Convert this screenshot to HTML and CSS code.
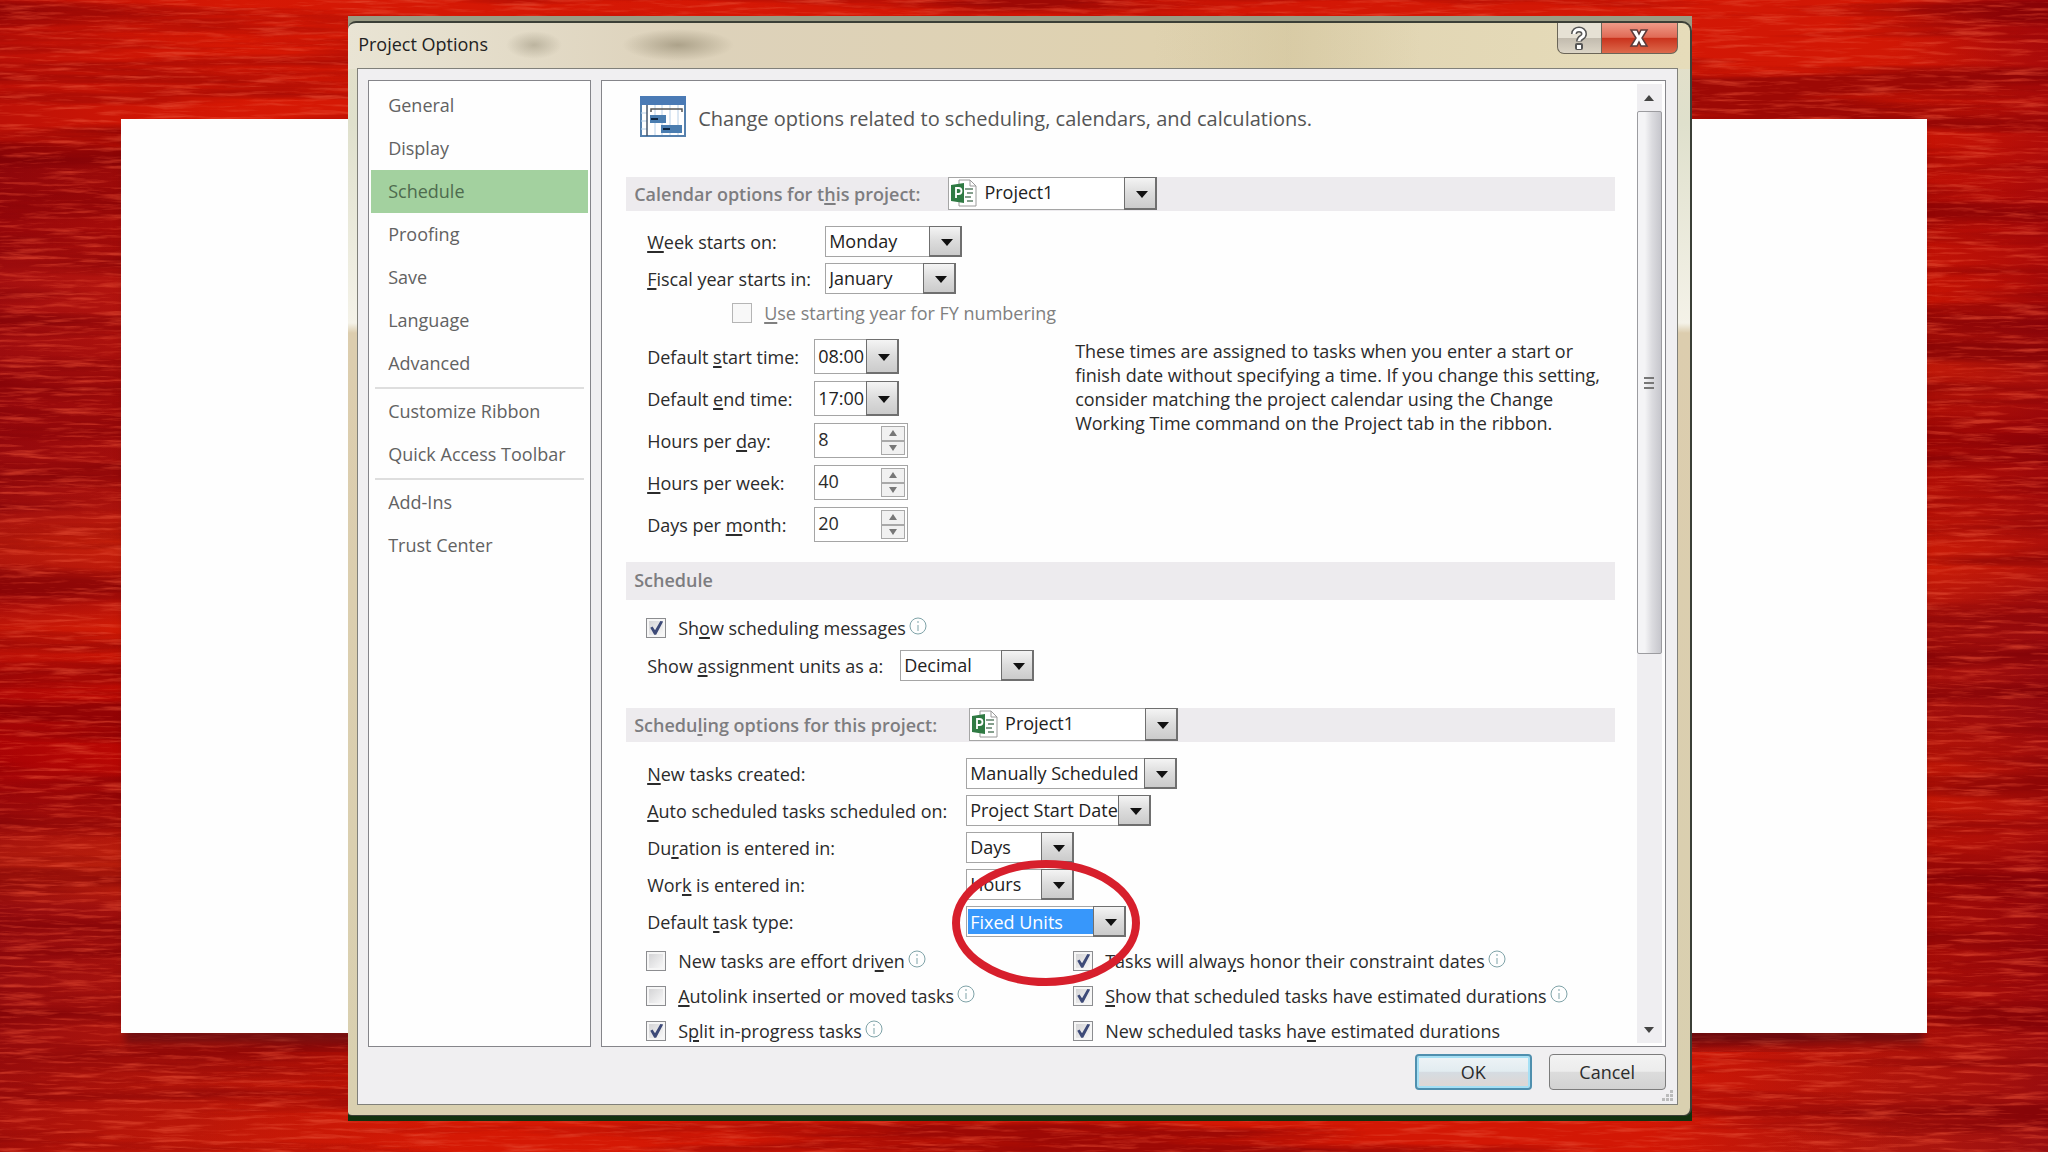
FILE: index.html
```html
<!DOCTYPE html>
<html lang="en">
<head>
<meta charset="utf-8">
<title>Project Options</title>
<link rel="stylesheet" href="styles.css">
</head>
<body>
<svg class="paint" aria-hidden="true" preserveAspectRatio="none" viewBox="0 0 2048 1152">
  <defs>
    <linearGradient id="left" x1="0" y1="0" x2="0" y2="1">
      <stop offset="0" stop-color="#c81406"/><stop offset=".1" stop-color="#d81c07"/>
      <stop offset=".125" stop-color="#c81205"/><stop offset=".14" stop-color="#930709"/>
      <stop offset=".2" stop-color="#a30a0a"/><stop offset=".24" stop-color="#b31410"/>
      <stop offset=".38" stop-color="#9c0a0c"/><stop offset=".44" stop-color="#a8120e"/>
      <stop offset=".47" stop-color="#cc230c"/><stop offset=".52" stop-color="#b0100a"/>
      <stop offset=".545" stop-color="#d61c06"/><stop offset=".6" stop-color="#bf0a04"/>
      <stop offset=".66" stop-color="#b80403"/><stop offset=".7" stop-color="#a50c0a"/>
      <stop offset=".76" stop-color="#c2260f"/><stop offset=".79" stop-color="#9a0d0e"/>
      <stop offset=".88" stop-color="#a5120f"/><stop offset=".93" stop-color="#a8120c"/>
      <stop offset="1" stop-color="#bb1609"/>
    </linearGradient>
    <linearGradient id="right" x1="0" y1="0" x2="0" y2="1">
      <stop offset="0" stop-color="#b00a07"/><stop offset=".06" stop-color="#c21106"/>
      <stop offset=".12" stop-color="#c91305"/><stop offset=".18" stop-color="#b80d06"/>
      <stop offset=".26" stop-color="#c81304"/><stop offset=".28" stop-color="#8d0607"/>
      <stop offset=".32" stop-color="#c01a0a"/><stop offset=".38" stop-color="#9d0505"/>
      <stop offset=".44" stop-color="#b81208"/><stop offset=".49" stop-color="#cf1d07"/>
      <stop offset=".54" stop-color="#a5110e"/><stop offset=".62" stop-color="#990c0c"/>
      <stop offset=".68" stop-color="#c81a06"/><stop offset=".73" stop-color="#b51107"/>
      <stop offset=".76" stop-color="#960707"/><stop offset=".86" stop-color="#a40c09"/>
      <stop offset=".92" stop-color="#a8120c"/><stop offset="1" stop-color="#a51510"/>
    </linearGradient>
    <linearGradient id="edge" x1="0" y1="0" x2="1" y2="0">
      <stop offset="0" stop-color="#700010" stop-opacity=".2"/><stop offset=".12" stop-color="#ff3000" stop-opacity=".12"/>
      <stop offset=".88" stop-color="#ff3000" stop-opacity=".05"/><stop offset="1" stop-color="#800010" stop-opacity=".35"/>
    </linearGradient>
    <linearGradient id="stroke" x1="0" y1="0" x2="1" y2="0">
      <stop offset="0" stop-color="#d01605" stop-opacity="0"/><stop offset=".15" stop-color="#d01605"/>
      <stop offset=".85" stop-color="#d01605"/><stop offset="1" stop-color="#d01605" stop-opacity="0"/>
    </linearGradient>
    <filter id="fine" x="0" y="0" width="100%" height="100%" color-interpolation-filters="sRGB">
      <feTurbulence type="fractalNoise" baseFrequency=".02 .25" numOctaves="4" seed="7"/>
      <feColorMatrix values="0 0 0 0 .9  0 0 0 0 .3  0 0 0 0 .2  3 0 0 0 -1.45"/>
    </filter>
    <filter id="broad" x="0" y="0" width="100%" height="100%" color-interpolation-filters="sRGB">
      <feTurbulence type="fractalNoise" baseFrequency=".0015 .03" numOctaves="6" seed="21"/>
      <feColorMatrix values="0 0 0 0 .48  0 0 0 0 0  0 0 0 0 .02  4 0 0 0 -1.75"/>
    </filter>
  </defs>
  <rect width="1024" height="1152" fill="url(#left)"/>
  <rect x="1024" width="1024" height="1152" fill="url(#right)"/>
  <path d="M0 0H1500V119H700L270 172L0 128Z" fill="#d01505"/>
  <rect x="1300" width="700" height="119" fill="url(#stroke)"/>
  <rect x="200" y="1052" width="1700" height="100" fill="url(#stroke)"/>
  <rect width="2048" height="1152" fill="url(#edge)"/>
  <rect width="2048" height="1152" filter="url(#broad)" opacity=".6"/>
  <rect width="2048" height="1152" filter="url(#fine)" opacity=".6"/>
</svg>

<main class="stage">
  <div class="card"></div>
  <div class="shell">
    <section class="window" aria-labelledby="dlg-title">
      <header class="titlebar">
        <h1 id="dlg-title">Project Options</h1>
        <div class="caption">
          <button type="button" class="cap help" aria-label="Help">
            <svg width="18" height="24" viewBox="0 0 18 24"><path d="M4 8C4 2 14 2 14 8C14 12 9 11 9 15.500" fill="none" stroke="#555" stroke-width="6"/><rect x="5" y="17" width="8" height="7" rx="2" fill="#555"/><path d="M4 8C4 2 14 2 14 8C14 12 9 11 9 15" fill="none" stroke="#fff" stroke-width="3"/><rect x="7" y="19" width="4" height="4" fill="#fff"/></svg>
          </button>
          <button type="button" class="cap close" aria-label="Close">
            <svg width="20" height="18" viewBox="0 0 20 18"><path d="M2 1H8L10 5L12 1H18L13 9L18 17H12L10 13L8 17H2L7 9Z" fill="#fff" stroke="#5b3a3a" stroke-width="1.500"/></svg>
          </button>
        </div>
      </header>

      <form class="client" onsubmit="return false">
        <div class="columns">
          <nav class="nav">
            <a href="#general">General</a>
            <a href="#display">Display</a>
            <a href="#schedule" class="current" aria-current="page">Schedule</a>
            <a href="#proofing">Proofing</a>
            <a href="#save">Save</a>
            <a href="#language">Language</a>
            <a href="#advanced">Advanced</a>
            <hr>
            <a href="#ribbon">Customize Ribbon</a>
            <a href="#toolbar">Quick Access Toolbar</a>
            <hr>
            <a href="#addins">Add-Ins</a>
            <a href="#trust">Trust Center</a>
          </nav>

          <div class="panel">
            <div class="content">
              <div class="intro">
                <svg width="46" height="41" viewBox="0 0 46 41"><rect x="1" y="1" width="44" height="39" fill="#fff" stroke="#5580ad" stroke-width="2"/><rect width="46" height="9" fill="#4a7ab5"/><path d="M15 9V39M22 9V39M30 9V39M38 9V39M1 17H7M1 25H7M1 33H7" stroke="#b8d0e8" stroke-width="1"/><path d="M7 9V40" stroke="#44546a" stroke-width="1.500"/><path d="M11 16V13H42V16" fill="none" stroke="#555" stroke-width="1.500"/><rect x="10" y="19" width="16" height="8" fill="#4a7db0"/><rect x="21" y="29" width="21" height="8" fill="#4a7db0"/><path d="M11 23H18M23 33H30" stroke="#0b2440" stroke-width="2"/></svg>
                <p>Change options related to scheduling, calendars, and calculations.</p>
              </div>

              <div class="bar">
                <label for="cal">Calendar options for t<u>h</u>is project:</label>
                <span class="combo project"><svg class="doc" width="26" height="28" viewBox="0 0 26 28"><path d="M8 1H19L25 7V27H8Z" fill="#fff" stroke="#9a9a9a"/><path d="M19 1V7H25" fill="none" stroke="#9a9a9a"/><path d="M14 10H22M16 14H22M14 18H20M16 22H22" stroke="#5e8068" stroke-width="1.500"/><path d="M0 6L13 4V24L0 22Z" fill="#2f7a43"/><path d="M5 19V9H7.500A3 3 0 0 1 7.500 15H5" fill="none" stroke="#fff" stroke-width="1.800"/></svg><select id="cal"><option>Project1</option></select></span>
              </div>

              <div class="fields near">
                <label for="week"><u>W</u>eek starts on:</label>
                <span class="combo w-137"><select id="week"><option>Monday</option></select></span>
                <label for="fiscal"><u>F</u>iscal year starts in:</label>
                <span class="combo w-131"><select id="fiscal"><option>January</option></select></span>
              </div>
              <div class="check inset">
                <input type="checkbox" id="fy" disabled><label for="fy"><u>U</u>se starting year for FY numbering</label>
              </div>

              <div class="times">
                <div class="fields tall">
                  <label for="start">Default <u>s</u>tart time:</label>
                  <span class="combo w-85"><select id="start"><option>08:00</option></select></span>
                  <label for="end">Default <u>e</u>nd time:</label>
                  <span class="combo w-85"><select id="end"><option>17:00</option></select></span>
                  <label for="hday">Hours per <u>d</u>ay:</label>
                  <span class="spin"><input id="hday" type="text" inputmode="numeric" value="8"><span class="steps"><button type="button" aria-label="More hours per day"></button><button type="button" aria-label="Fewer hours per day"></button></span></span>
                  <label for="hweek"><u>H</u>ours per week:</label>
                  <span class="spin"><input id="hweek" type="text" inputmode="numeric" value="40"><span class="steps"><button type="button" aria-label="More hours per week"></button><button type="button" aria-label="Fewer hours per week"></button></span></span>
                  <label for="dmonth">Days per <u>m</u>onth:</label>
                  <span class="spin"><input id="dmonth" type="text" inputmode="numeric" value="20"><span class="steps"><button type="button" aria-label="More days per month"></button><button type="button" aria-label="Fewer days per month"></button></span></span>
                </div>
                <p class="note">These times are assigned to tasks when you enter a start or<br>finish date without specifying a time. If you change this setting,<br>consider matching the project calendar using the Change<br>Working Time command on the Project tab in the ribbon.</p>
              </div>

              <div class="bar plain"><h2>Schedule</h2></div>
              <div class="check">
                <input type="checkbox" id="msgs" checked><label for="msgs">Sh<u>o</u>w scheduling messages</label><svg class="info" viewBox="0 0 18 18"><circle cx="9" cy="9" r="8"/><path d="M9 4V6M9 8V14"/></svg>
              </div>
              <div class="fields units">
                <label for="units">Show <u>a</u>ssignment units as a:</label>
                <span class="combo w-134"><select id="units"><option>Decimal</option></select></span>
              </div>

              <div class="bar last">
                <label for="sched">Schedu<u>l</u>ing options for this project:</label>
                <span class="combo project"><svg class="doc" width="26" height="28" viewBox="0 0 26 28"><path d="M8 1H19L25 7V27H8Z" fill="#fff" stroke="#9a9a9a"/><path d="M19 1V7H25" fill="none" stroke="#9a9a9a"/><path d="M14 10H22M16 14H22M14 18H20M16 22H22" stroke="#5e8068" stroke-width="1.500"/><path d="M0 6L13 4V24L0 22Z" fill="#2f7a43"/><path d="M5 19V9H7.500A3 3 0 0 1 7.500 15H5" fill="none" stroke="#fff" stroke-width="1.800"/></svg><select id="sched"><option>Project1</option></select></span>
              </div>

              <div class="fields far">
                <label for="newt"><u>N</u>ew tasks created:</label>
                <span class="combo w-211"><select id="newt"><option>Manually Scheduled</option></select></span>
                <label for="auto"><u>A</u>uto scheduled tasks scheduled on:</label>
                <span class="combo w-185"><select id="auto"><option>Project Start Date</option></select></span>
                <label for="dur">Du<u>r</u>ation is entered in:</label>
                <span class="combo w-108"><select id="dur"><option>Days</option></select></span>
                <label for="work">Wor<u>k</u> is entered in:</label>
                <span class="combo w-108"><select id="work"><option>Hours</option></select></span>
                <label for="type">Default <u>t</u>ask type:</label>
                <span class="combo w-160 chosen"><select id="type"><option>Fixed Units</option></select><svg class="ring" viewBox="0 0 188 126"><ellipse cx="94" cy="63" rx="90" ry="59"/></svg></span>
              </div>

              <div class="checks">
                <div class="check"><input type="checkbox" id="c1"><label for="c1">New tasks are effort dri<u>v</u>en</label><svg class="info" viewBox="0 0 18 18"><circle cx="9" cy="9" r="8"/><path d="M9 4V6M9 8V14"/></svg></div>
                <div class="check"><input type="checkbox" id="c2" checked><label for="c2">Tasks will alwa<u>y</u>s honor their constraint dates</label><svg class="info" viewBox="0 0 18 18"><circle cx="9" cy="9" r="8"/><path d="M9 4V6M9 8V14"/></svg></div>
                <div class="check"><input type="checkbox" id="c3"><label for="c3"><u>A</u>utolink inserted or moved tasks</label><svg class="info" viewBox="0 0 18 18"><circle cx="9" cy="9" r="8"/><path d="M9 4V6M9 8V14"/></svg></div>
                <div class="check"><input type="checkbox" id="c4" checked><label for="c4"><u>S</u>how that scheduled tasks have estimated durations</label><svg class="info" viewBox="0 0 18 18"><circle cx="9" cy="9" r="8"/><path d="M9 4V6M9 8V14"/></svg></div>
                <div class="check"><input type="checkbox" id="c5" checked><label for="c5">S<u>p</u>lit in-progress tasks</label><svg class="info" viewBox="0 0 18 18"><circle cx="9" cy="9" r="8"/><path d="M9 4V6M9 8V14"/></svg></div>
                <div class="check"><input type="checkbox" id="c6" checked><label for="c6">New scheduled tasks ha<u>v</u>e estimated durations</label></div>
              </div>
            </div>
            <div class="scrollbar">
              <button type="button" class="up" aria-label="Scroll up"></button>
              <div class="track"><div class="thumb"><i></i><i></i><i></i></div></div>
              <button type="button" class="down" aria-label="Scroll down"></button>
            </div>
          </div>
        </div>
        <footer class="actions">
          <button type="submit" class="push primary">OK</button>
          <button type="button" class="push">Cancel</button>
          <svg class="grip" width="12" height="12" viewBox="0 0 12 12" fill="#bbb"><path d="M8 0h3v3h-3zM4 4h3v3h-3zM8 4h3v3h-3zM0 8h3v3h-3zM4 8h3v3h-3zM8 8h3v3h-3z"/></svg>
        </footer>
      </form>
    </section>
  </div>
</main>
</body>
</html>
```
FILE: styles.css
```css
* { box-sizing: border-box; }

body {
  margin: 0;
  background: #b8100a;
  color: #2b2b2b;
  font: 18px/24px "Open Sans", "Noto Sans", sans-serif;
}

h1, h2, p { margin: 0; font: inherit; }
button, input, select { font: inherit; color: inherit; margin: 0; }
u { text-decoration: underline; text-decoration-thickness: 2px; text-underline-offset: 2px; }

.paint { position: absolute; inset: 0; width: 100%; height: 100%; }

.stage {
  position: relative;
  display: grid;
  min-height: 100vh;
  padding: 16px 0 31px;
}
.stage > * { grid-area: 1 / 1; }

.card {
  margin: 103px 5.9vw 88px;
  background: #fefefe;
  box-shadow: 0 14px 8px -4px rgba(60, 10, 20, .5);
}

/* window frame */
.shell {
  margin: 0 17.4vw 0 17vw;
  padding: 5px 0;
  background: linear-gradient(#9b9c85, #9b9c85 30px, #3c4a38 30px, #12320f);
  position: relative;
}
.window {
  display: flex;
  flex-direction: column;
  height: 100%;
  padding: 0 12px 10px 9px;
  border: solid #3b3f37;
  border-width: 2px 2px 1px 0;
  border-radius: 8px 10px 8px 4px;
  background:
    linear-gradient(90deg, transparent 60%, rgba(200, 185, 140, .35) 70%, transparent 80%) 0 0 / 100% 46px no-repeat,
    radial-gradient(28px 14px at 186px 22px, rgba(150, 142, 120, .5), transparent) no-repeat,
    radial-gradient(56px 16px at 330px 22px, rgba(140, 130, 105, .6), transparent) no-repeat,
    linear-gradient(90deg, #e9e4d4, #ddd2bb 25%, #dfd2b0 60%, #e6dcba) 0 0 / 100% 46px no-repeat,
    linear-gradient(#e4dfc8, #dfe0cc 100px, #f4f2e8 300px, #dccdae 310px, #d9d0b0);
}
.titlebar { display: flex; justify-content: space-between; height: 45px; }
.titlebar h1 { line-height: 42px; padding-left: 1px; color: #222; }
.caption { display: flex; height: 31px; }
.cap {
  display: flex;
  align-items: center;
  justify-content: center;
  padding: 0;
  border: 1px solid #6b6558;
  border-top: 0;
}
.cap.help { width: 45px; border-radius: 0 0 0 7px; background: linear-gradient(#e6e1d4 50%, #c2bbae 50%, #dcd5c6); }
.cap.close { width: 76px; border-left: 0; border-radius: 0 0 7px 0; background: linear-gradient(#ee9a88, #e06a55 48%, #c9321c 50%, #dd6a4c); }

/* client area */
.client {
  flex: 1;
  display: flex;
  flex-direction: column;
  padding: 11px 11px 14px 10px;
  border: 1px solid #80807a;
  background: #f0eff1;
}
.columns { flex: 1; display: flex; gap: 10px; }
.nav, .panel { border: 1px solid #85858a; background: #fefefe; }
.nav { flex: 0 0 223px; padding: 3px 2px; color: #626262; }
.nav a { display: block; padding: 0 0 0 17px; line-height: 43px; color: inherit; text-decoration: none; }
.nav .current { background: #a3d19f; color: #4e6b4e; }
.nav hr { height: 2px; margin: 2px 4px 1px; border: 0; background: #dedede; }

.panel { flex: 1; display: flex; gap: 22px; padding: 3px 3px 3px 24px; }
.content { flex: 1; }

.intro { display: flex; align-items: center; gap: 12px; margin: 12px 0 40px 14px; color: #555; font-size: 20px; }
.intro p { padding-top: 4px; }

.bar {
  display: flex;
  gap: 28px;
  height: 34px;
  padding-left: 8px;
  background: #edebee;
  color: #7d7d80;
  font-weight: 600;
  line-height: 34px;
}
.bar .combo { font-weight: 400; }
.bar.plain { height: 38px; margin: 20px 0 16px; line-height: 36px; }
.bar.plain h2 { font-weight: 600; }
.bar.last { gap: 32px; margin-top: 27px; }

.fields {
  display: grid;
  grid-template-columns: 178px auto;
  grid-auto-rows: 31px;
  row-gap: 6px;
  align-items: center;
  justify-content: start;
  margin-left: 21px;
}
.fields.near { margin-top: 15px; }
.fields.tall { grid-template-columns: 167px auto; grid-auto-rows: 35px; row-gap: 7px; }
.fields.units { grid-template-columns: 253px auto; margin-top: 10px; }
.fields.far { grid-template-columns: 319px auto; margin-top: 16px; }
.fields label { white-space: nowrap; }

.times { display: flex; gap: 167px; margin-top: 14px; }
.note { white-space: nowrap; }

/* drop-downs */
.combo { position: relative; display: block; height: 31px; color: #222; }
.combo select {
  appearance: none;
  display: block;
  width: 100%;
  height: 100%;
  padding: 0 29px 2px 3px;
  border: 1px solid #a5a5a5;
  border-radius: 0;
  background: #fff;
  line-height: 24px;
}
.combo::after {
  content: "";
  position: absolute;
  inset: 0 0 0 auto;
  width: 30px;
  border: 2px solid #6f6f6f;
  border-width: 1px 2px 2px 1px;
  background: linear-gradient(#f4f4f4, #dcdcdc 50%, #cbcbcb);
  pointer-events: none;
}
.combo::before {
  content: "";
  position: absolute;
  z-index: 1;
  right: 9px;
  top: 50%;
  margin-top: -3px;
  border: 6px solid transparent;
  border-top: 7px solid #111;
  border-bottom: 0;
  pointer-events: none;
}
.tall .combo { height: 35px; }
.combo.project { width: 209px; height: 33px; }
.combo.project select { padding: 0 30px 3px 35px; }
.doc { position: absolute; left: 3px; top: 2px; }
.w-85 { width: 85px; }
.w-108 { width: 108px; }
.w-131 { width: 131px; }
.w-134 { width: 134px; }
.w-137 { width: 137px; }
.w-160 { width: 160px; }
.w-185 { width: 185px; }
.w-211 { width: 211px; }
.chosen select { background: #3797fb content-box; padding: 2px 31px 2px 1px; text-indent: 2px; color: #fff; }
.ring { position: absolute; z-index: 2; left: -14px; top: -46px; width: 188px; height: 126px; pointer-events: none; }
.ring ellipse { fill: none; stroke: #d71f2c; stroke-width: 8; }

/* spin boxes */
.spin { display: flex; width: 94px; height: 35px; padding: 2px; border: 1px solid #a5a5a5; background: #fff; }
.spin input { flex: 1; min-width: 0; padding: 0 0 3px 1px; border: 0; background: none; outline: 0; }
.steps { display: flex; flex-direction: column; width: 24px; }
.steps button {
  flex: 1;
  display: flex;
  align-items: center;
  justify-content: center;
  padding: 0;
  border: 1px solid #a9a9a9;
  background: #f1f1f1;
}
.steps button::before { content: ""; border: 4px solid transparent; border-top: 0; border-bottom: 6px solid #777; }
.steps button + button::before { border-top: 6px solid #777; border-bottom: 0; }

/* tick boxes */
.check { display: flex; align-items: center; height: 24px; margin-left: 20px; }
.check input {
  appearance: none;
  flex: none;
  width: 20px;
  height: 20px;
  margin-right: 12px;
  border: 1px solid #8c8d90;
  background: linear-gradient(135deg, #d4d4d6, #f8f8f8) content-box, #f6f6f6;
  padding: 2px;
}
.check input:checked::before {
  content: "";
  display: block;
  width: 14px;
  height: 14px;
  background: #3d4a78;
  clip-path: polygon(8% 48%, 24% 40%, 42% 66%, 80% 0, 100% 4%, 50% 98%, 36% 98%);
}
.check input:disabled { border-color: #b5b5b5; background: #f8f8f8; }
.check label { white-space: nowrap; }
.inset { margin: 7px 0 0 106px; color: #808080; }
.info { flex: none; width: 18px; height: 18px; margin: -4px 0 0 3px; fill: none; stroke: #7fa3a8; stroke-width: 1; }
.checks { display: grid; grid-template-columns: 427px auto; row-gap: 11px; justify-content: start; margin-top: 12px; }

/* scroll bar */
.scrollbar { display: flex; flex-direction: column; width: 25px; background: #efeef1; }
.scrollbar button { height: 27px; padding: 0; border: 0; background: none; display: flex; align-items: center; justify-content: center; }
.scrollbar button::before { content: ""; border: 5px solid transparent; }
.scrollbar .up::before { border-top: 0; border-bottom: 6px solid #444; }
.scrollbar .down::before { border-bottom: 0; border-top: 6px solid #444; }
.track { flex: 1; }
.thumb {
  display: flex;
  flex-direction: column;
  align-items: center;
  justify-content: center;
  gap: 3px;
  height: 60%;
  border: 1px solid #9c9ca0;
  border-radius: 2px;
  background: linear-gradient(90deg, #f4f4f6 30%, #dcdce0 60%, #c6c6cc);
}
.thumb i { width: 10px; height: 2px; background: #777; }

/* buttons */
.actions { position: relative; display: flex; justify-content: flex-end; gap: 17px; padding-top: 7px; }
.push {
  width: 117px;
  height: 36px;
  padding: 0;
  border: 1px solid #7c7c7c;
  border-radius: 4px;
  background: linear-gradient(#f3f3f3, #ececec 48%, #dcdcdc 50%, #d2d2d2);
}
.push.primary {
  border: 2px solid #4f8fae;
  box-shadow: inset 0 0 0 2px #a5e0f5;
  background: linear-gradient(#eef4f7, #e2ecf0 48%, #d5dce2 50%, #dfd6d2);
}
.grip { position: absolute; right: -8px; bottom: -12px; }
```
